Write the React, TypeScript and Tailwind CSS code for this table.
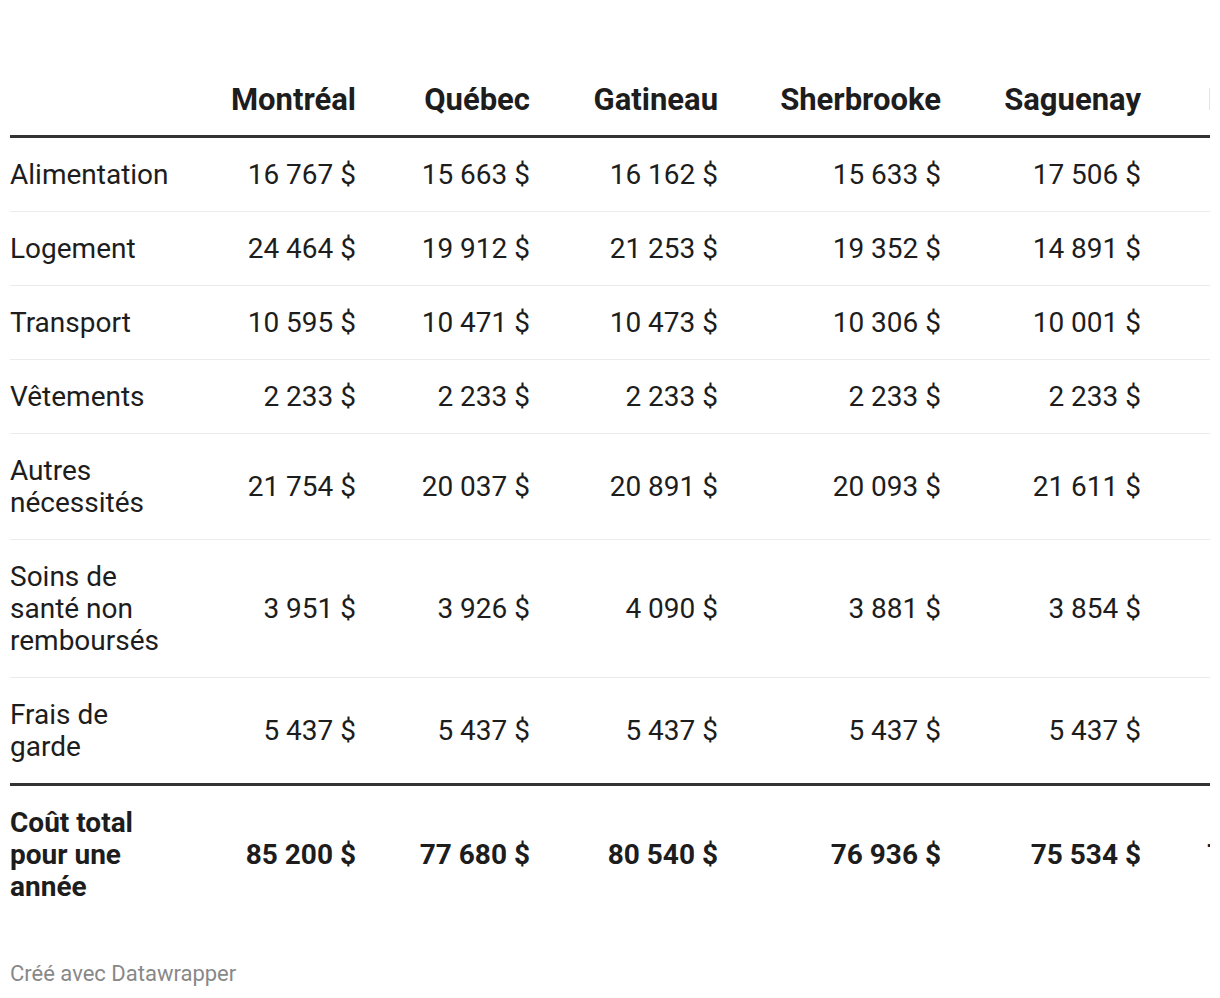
import React from "react";

const cities = ["Montréal", "Québec", "Gatineau", "Sherbrooke", "Saguenay", "Lévis"];

const rows: { label: string[]; values: string[] }[] = [
  { label: ["Alimentation"], values: ["16 767 $", "15 663 $", "16 162 $", "15 633 $", "17 506 $", "16 210 $"] },
  { label: ["Logement"], values: ["24 464 $", "19 912 $", "21 253 $", "19 352 $", "14 891 $", "18 402 $"] },
  { label: ["Transport"], values: ["10 595 $", "10 471 $", "10 473 $", "10 306 $", "10 001 $", "10 330 $"] },
  { label: ["Vêtements"], values: ["2 233 $", "2 233 $", "2 233 $", "2 233 $", "2 233 $", "2 233 $"] },
  { label: ["Autres", "nécessités"], values: ["21 754 $", "20 037 $", "20 891 $", "20 093 $", "21 611 $", "20 120 $"] },
  { label: ["Soins de", "santé non", "remboursés"], values: ["3 951 $", "3 926 $", "4 090 $", "3 881 $", "3 854 $", "3 900 $"] },
  { label: ["Frais de", "garde"], values: ["5 437 $", "5 437 $", "5 437 $", "5 437 $", "5 437 $", "5 437 $"] },
];

const total = { label: ["Coût total", "pour une", "année"], values: ["85 200 $", "77 680 $", "80 540 $", "76 936 $", "75 534 $", "77 200 $"] };

// colonnes : largeur jusqu'au bord droit du texte
const widths = ["w-[200px]", "w-[146px]", "w-[174px]", "w-[188px]", "w-[223px]", "w-[200px]", "w-[200px]"];

const Label = ({ lines }: { lines: string[] }) => (
  <>
    {lines.map((l, i) => (
      <div key={i}>{l}</div>
    ))}
  </>
);

export default function App() {
  return (
    <div className="bg-white w-[1220px] h-[998px] text-[#1d1d1d]" style={{ fontFamily: "Roboto, 'Liberation Sans', sans-serif" }}>
      <div className="pt-[82px] pl-[10px]">
        <div className="w-[1200px] overflow-hidden">
          <table className="table-fixed border-collapse w-[1331px] text-[28px] leading-[32px]">
            <colgroup>
              {widths.map((w, i) => (
                <col key={i} className={w} />
              ))}
            </colgroup>
            <thead>
              <tr className="border-b-[3px] border-[#333]">
                <th className="pb-[17px]"></th>
                {cities.map((c, i) => (
                  <th key={c} className={`pb-[17px] text-[31px] leading-[36px] font-bold whitespace-nowrap ${i === 5 ? "text-left pl-[67px]" : "text-right"}`}>
                    {c}
                  </th>
                ))}
              </tr>
            </thead>
            <tbody>
              {rows.map((r, ri) => (
                <tr key={ri} className={ri === rows.length - 1 ? "border-b-[3px] border-[#333]" : "border-b border-[#ececec]"}>
                  <td className="pt-[21px] pb-[20px] text-left align-middle">
                    <Label lines={r.label} />
                  </td>
                  {r.values.map((v, i) => (
                    <td key={i} className={`pt-[21px] pb-[20px] align-middle whitespace-nowrap ${i === 5 ? "text-left pl-[72px]" : "text-right"}`}>
                      {v}
                    </td>
                  ))}
                </tr>
              ))}
              <tr>
                <td className="pt-[21px] pb-[20px] text-left font-bold align-middle">
                  <Label lines={total.label} />
                </td>
                {total.values.map((v, i) => (
                  <td key={i} className={`pt-[21px] pb-[20px] font-bold align-middle whitespace-nowrap ${i === 5 ? "text-left pl-[66px]" : "text-right"}`}>
                    {v}
                  </td>
                ))}
              </tr>
            </tbody>
          </table>
        </div>
        <div className="mt-[38px] text-[22px] leading-[26px] text-[#888]">Créé avec Datawrapper</div>
      </div>
    </div>
  );
}
